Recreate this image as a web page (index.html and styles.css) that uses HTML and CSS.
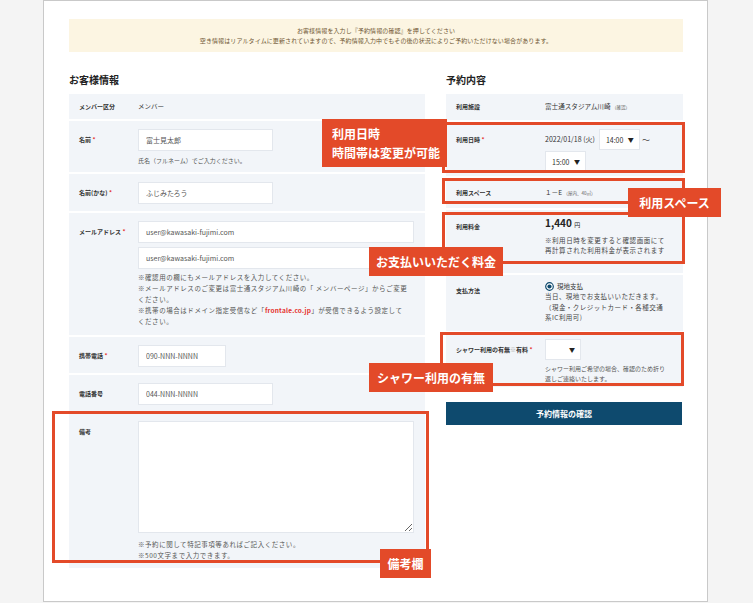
FILE: index.html
```html
<!DOCTYPE html>
<html lang="ja">
<head>
<meta charset="utf-8">
<title>予約情報入力</title>
<link rel="stylesheet" href="styles.css">
</head>
<body>
<div class="stage">
  <div class="panel">
    <div class="notice">
      <p>お客様情報を入力し『予約情報の確認』を押してください</p>
      <p>空き情報はリアルタイムに更新されていますので、予約情報入力中でもその後の状況によりご予約いただけない場合があります。</p>
    </div>
    <div class="columns">
      <section class="col">
        <h2 class="heading">お客様情報</h2>
        <div class="rows">
          <div class="row row-short">
            <div class="label">メンバー区分</div>
            <div class="value">メンバー</div>
          </div>
          <div class="row">
            <div class="label">名前 <span class="req">*</span></div>
            <div class="value">
              <input class="field w-mid" type="text" value="富士見太郎">
              <p class="help">氏名（フルネーム）でご入力ください。</p>
            </div>
          </div>
          <div class="row row-kana">
            <div class="label">名前(かな) <span class="req">*</span></div>
            <div class="value">
              <input class="field w-mid" type="text" value="ふじみたろう">
            </div>
          </div>
          <div class="row row-mail">
            <div class="label">メールアドレス <span class="req">*</span></div>
            <div class="value">
              <input class="field w-full gap" type="text" value="user@kawasaki-fujimi.com">
              <input class="field w-full" type="text" value="user@kawasaki-fujimi.com">
              <p class="note">※確認用の欄にもメールアドレスを入力してください。<br>※メールアドレスのご変更は富士通スタジアム川崎の「 メンバーページ」からご変更<br>ください。<br>※携帯の場合はドメイン指定受信など「<b class="link">frontale.co.jp</b>」が受信できるよう設定して<br>ください。</p>
            </div>
          </div>
          <div class="row">
            <div class="label">携帯電話 <span class="req">*</span></div>
            <div class="value">
              <input class="field w-small" type="text" value="090-NNN-NNNN">
            </div>
          </div>
          <div class="row">
            <div class="label">電話番号</div>
            <div class="value">
              <input class="field w-mid" type="text" value="044-NNN-NNNN">
            </div>
          </div>
          <div class="row">
            <div class="label label-top">備考</div>
            <div class="value">
              <textarea class="field w-full area"></textarea>
              <p class="note note-memo">※予約に関して特記事項等あればご記入ください。<br>※500文字まで入力できます。</p>
            </div>
          </div>
        </div>
      </section>

      <section class="col col-right">
        <h2 class="heading">予約内容</h2>
        <div class="rows">
          <div class="row row-short">
            <div class="label">利用施設</div>
            <div class="value val-lg">富士通スタジアム川崎 <span class="tiny">（確認）</span></div>
          </div>
          <div class="row row-date">
            <div class="label label-sel">利用日時 <span class="req">*</span></div>
            <div class="value date-line">
              <span class="date">2022/01/18 (火)</span>
              <span class="select sel-time">14:00<span class="arrow">▼</span></span>
              <span class="tilde">〜</span>
              <span class="select sel-time">15:00<span class="arrow">▼</span></span>
            </div>
          </div>
          <div class="row row-space">
            <div class="label">利用スペース</div>
            <div class="value val-lg">１－E <span class="tiny">（屋内、40㎡）</span></div>
          </div>
          <div class="row row-fee">
            <div class="label label-fee">利用料金</div>
            <div class="value">
              <p class="price">1,440 <span class="yen">円</span></p>
              <p class="note-r">※利用日時を変更すると確認画面にて<br>再計算された利用料金が表示されます<br>。</p>
            </div>
          </div>
          <div class="row row-pay">
            <div class="label label-pay">支払方法</div>
            <div class="value">
              <p class="radio-line">
                <svg class="radio" width="9" height="9" viewBox="0 0 9 9"><circle cx="4.5" cy="4.5" r="3.8" fill="#fff" stroke="#0e4a6e" stroke-width="1.2"/><circle cx="4.5" cy="4.5" r="2.1" fill="#0e4a6e"/></svg>
                現地支払
              </p>
              <p class="note-r pay-note">当日、現地でお支払いいただきます。<br>（現金・クレジットカード・各種交通<br>系IC利用可)</p>
            </div>
          </div>
          <div class="row row-shower">
            <div class="label label-sel nowrap">シャワー利用の有無<span class="muted">※</span>有料 <span class="req">*</span></div>
            <div class="value">
              <span class="select sel-shower"><span class="arrow">▼</span></span>
              <p class="help shower-note">シャワー利用ご希望の場合、確認のため折り<br>返しご連絡いたします。</p>
            </div>
          </div>
        </div>
        <button class="submit" type="button">予約情報の確認</button>
      </section>
    </div>
  </div>

  <div class="mark mark-date"></div>
  <div class="mark mark-space"></div>
  <div class="mark mark-fee"></div>
  <div class="mark mark-shower"></div>
  <div class="mark mark-memo"></div>

  <div class="tag tag-date">利用日時<br>時間帯は変更が可能</div>
  <div class="tag tag-space">利用スペース</div>
  <div class="tag tag-fee">お支払いいただく料金</div>
  <div class="tag tag-shower">シャワー利用の有無</div>
  <div class="tag tag-memo">備考欄</div>
</div>
</body>
</html>
```

FILE: styles.css
```css
* {
  box-sizing: border-box;
  margin: 0;
  padding: 0;
}

body {
  background: #f4f4f4;
  font-family: "Noto Sans CJK JP", "Noto Sans", sans-serif;
  color: #333;
}

.stage {
  position: relative;
  width: 753px;
  height: 603px;
  overflow: hidden;
}

.panel {
  margin-left: 43px;
  width: 665px;
  height: 602px;
  background: #fff;
  border: 1px solid #c9c9c9;
  padding: 18px 24px 0 25px;
}

.notice {
  height: 33px;
  background: #fcf5e2;
  display: flex;
  flex-direction: column;
  justify-content: center;
  align-items: center;
  font-size: 6px;
  line-height: 10px;
  letter-spacing: 0.1px;
  color: #6f5532;
}

.columns {
  display: grid;
  grid-template-columns: 356px 237px;
  column-gap: 21px;
  margin-top: 21px;
}

.heading {
  font-size: 10px;
  line-height: 14px;
  font-weight: 700;
  margin-bottom: 7px;
  color: #222;
}

.rows {
  display: flex;
  flex-direction: column;
  gap: 2px;
}

.row {
  display: flex;
  background: #f2f5f9;
  padding: 8px 11px 6px 10px;
}

.label {
  flex: 0 0 59px;
  font-size: 6px;
  font-weight: 700;
  line-height: 22px;
  color: #333;
}

.col-right .label {
  flex-basis: 89px;
}

.label-top {
  line-height: 10px;
  padding-top: 6px;
}

.req {
  color: #e5322d;
}

.muted {
  color: #aaa;
  font-weight: 400;
}

.nowrap {
  white-space: nowrap;
}

.value {
  flex: 1;
  min-width: 0;
  font-size: 6.5px;
}

.row-short {
  padding: 7px 10px 7px;
}

.row-short .label,
.row-short .value {
  line-height: 11px;
}

.row-kana {
  padding-bottom: 7px;
}

.row-mail {
  padding-bottom: 6px;
}

.field {
  display: block;
  height: 22px;
  background: #fff;
  border: 1px solid #e3e7ed;
  font-family: "Noto Sans CJK JP", "Noto Sans", sans-serif;
  font-size: 7px;
  color: #555;
  padding: 0 7px;
  outline: none;
}

.w-mid {
  width: 135px;
}

.w-small {
  width: 88px;
}

.w-full {
  width: 276px;
}

.gap {
  margin-bottom: 4px;
}

.area {
  height: 112px;
  resize: both;
}

.help {
  font-size: 6px;
  line-height: 10px;
  margin-top: 5px;
  color: #555;
}

.note {
  font-size: 6.5px;
  letter-spacing: 0.55px;
  line-height: 11px;
  margin-top: 3px;
  margin-bottom: 2px;
  color: #555;
  white-space: nowrap;
}

.note-memo {
  margin-top: 6px;
  margin-bottom: 1px;
}

.link {
  color: #e5322d;
  font-weight: 700;
  letter-spacing: 0.2px;
}

.val-lg {
  font-size: 6.6px;
  color: #333;
}

.tiny {
  font-size: 4.5px;
  color: #666;
}

/* date row */
.row-date {
  padding: 7px 10px 4px;
}

.label-sel {
  line-height: 21px;
}

.date-line {
  display: flex;
  flex-wrap: wrap;
  align-items: center;
  column-gap: 4px;
  row-gap: 1px;
}

.date {
  font-size: 7px;
  line-height: 21px;
  color: #333;
}

.select {
  display: inline-flex;
  align-items: center;
  justify-content: space-between;
  height: 21px;
  background: #fff;
  border: 1px solid #e3e7ed;
  font-size: 7px;
  color: #333;
  padding: 0 5px 0 6px;
}

.sel-time {
  width: 41px;
}

.arrow {
  font-size: 6px;
  color: #222;
}

.tilde {
  font-size: 8px;
  margin-left: -2px;
  color: #444;
}

/* space row */
.row-space {
  padding: 9px 10px 9px;
}

.row-space .label,
.row-space .value {
  line-height: 11px;
}

/* fee row */
.row-fee {
  padding: 6px 10px 8px;
}

.label-fee {
  line-height: 11px;
  margin-top: 5px;
}

.price {
  font-size: 10px;
  font-weight: 700;
  line-height: 14px;
  color: #222;
}

.yen {
  font-size: 6px;
  font-weight: 400;
}

.note-r {
  font-size: 6.5px;
  letter-spacing: 0.55px;
  line-height: 10px;
  margin-top: 3px;
  color: #444;
  white-space: nowrap;
}

/* payment row */
.row-pay {
  padding: 6px 10px 8px;
}

.label-pay {
  line-height: 10px;
  margin-top: 5px;
}

.radio-line {
  display: flex;
  align-items: center;
  gap: 3px;
  font-size: 6.5px;
  line-height: 10px;
  color: #333;
}

.pay-note {
  margin-top: 0;
  line-height: 10.5px;
  letter-spacing: 0.45px;
}

/* shower row */
.row-shower {
  padding: 6px 10px 3px;
}

.sel-shower {
  width: 36px;
  justify-content: flex-end;
}

.shower-note {
  margin-top: 4px;
}

.submit {
  display: flex;
  align-items: center;
  justify-content: center;
  width: 236px;
  height: 23px;
  margin-top: 15px;
  border: none;
  background: #0e4a6e;
  color: #fff;
  font-family: "Noto Sans CJK JP", "Noto Sans", sans-serif;
  font-size: 8px;
  font-weight: 700;
}

/* annotation overlays */
.mark {
  position: absolute;
  border: 3px solid #e34a29;
}

.mark-date {
  left: 442px;
  top: 122px;
  width: 243px;
  height: 51px;
}

.mark-space {
  left: 442px;
  top: 178px;
  width: 243px;
  height: 26px;
}

.mark-fee {
  left: 442px;
  top: 212px;
  width: 243px;
  height: 52px;
}

.mark-shower {
  left: 440px;
  top: 332px;
  width: 244px;
  height: 54px;
}

.mark-memo {
  left: 52px;
  top: 411px;
  width: 377px;
  height: 152px;
}

.tag {
  position: absolute;
  background: #e34a29;
  color: #fff;
  font-size: 12px;
  font-weight: 700;
  line-height: 19px;
  height: 29px;
  display: flex;
  align-items: center;
  justify-content: center;
  white-space: nowrap;
}

.tag-date {
  left: 322px;
  top: 119px;
  width: 125px;
  height: 48px;
  display: block;
  padding: 5px 0 0 10px;
}

.tag-space {
  left: 628px;
  top: 188px;
  width: 93px;
}

.tag-fee {
  left: 369px;
  top: 247px;
  width: 134px;
}

.tag-shower {
  left: 369px;
  top: 363px;
  width: 124px;
}

.tag-memo {
  left: 380px;
  top: 549px;
  width: 51px;
}
```
